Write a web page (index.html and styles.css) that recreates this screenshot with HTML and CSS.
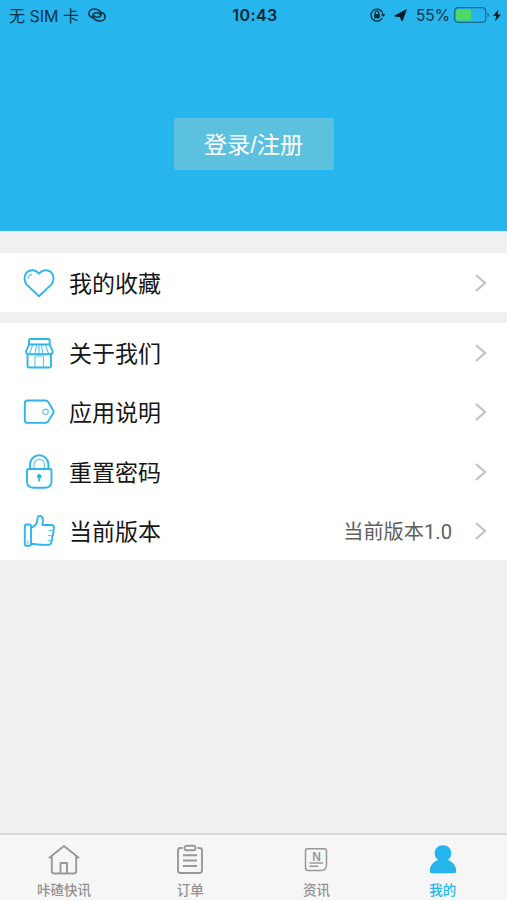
FILE: index.html
```html
<!DOCTYPE html>
<html lang="zh-CN">
<head>
<meta charset="utf-8">
<title>我的</title>
<link rel="stylesheet" href="styles.css">
</head>
<body>
<div class="app">
  <header class="hero">
    <div class="status">
      <div class="status-left"><span>无 SIM 卡</span>
        <svg class="link" width="18" height="14" viewBox="0 0 18 14"><g fill="none" stroke="#0c3447" stroke-width="1.600" stroke-linecap="round"><path d="M4.500 9.600C2.300 8.900.9 7.200.9 5.300.9 2.700 3.300 1 6.300 1c3.700 0 6.800 2.300 6.800 5 0 2-1.600 3.300-3.700 3.300-1.800 0-3.200-.8-3.800-2"/><path d="M13.500 4.400c2.200.7 3.600 2.400 3.600 4.300 0 2.600-2.400 4.300-5.400 4.300C8 13 4.900 10.700 4.900 8c0-2 1.600-3.300 3.700-3.300 1.800 0 3.200.8 3.800 2"/></g></svg>
      </div>
      <div class="time">10:43</div>
      <div class="status-right">
        <svg class="lock-rot" width="16" height="14" viewBox="0 0 16 14"><g fill="none" stroke="#082b3c" stroke-width="1.300"><path d="M12.300 10A6 6 0 1 1 13 6.500"/><path d="M5.300 6V4.900a1.700 1.700 0 0 1 3.400 0V6"/></g><path d="M4.200 5.900h5.600v4.300H4.200zM10.800 6.200h4.600L13.100 9z" fill="#082b3c"/></svg>
        <svg class="arrow" width="13" height="13" viewBox="0 0 13 13"><path d="M12.300.8 8 12 6.300 7.700.8 6.900z" fill="#061d29" stroke="#061d29" stroke-width="1" stroke-linejoin="round"/></svg>
        <span class="percent">55%</span>
        <svg class="battery" width="36" height="16" viewBox="0 0 36 16"><rect x=".7" y=".7" width="31" height="14.600" rx="3.500" fill="none" stroke="#176a91" stroke-width="1.200"/><path d="M3.500 2.500H17v11H3.500A1.500 1.500 0 0 1 2 12V4a1.500 1.500 0 0 1 1.500-1.500z" fill="#4ed964"/><path d="M33.500 5.500q3 2.500 0 5z" fill="#176a91"/></svg>
        <svg class="bolt" width="8" height="13" viewBox="0 0 8 13"><path d="M5.500.5 0 7h3.300L2 12.500 8 5.500H4.600z" fill="#061d29"/></svg>
      </div>
    </div>
    <button class="login">登录/注册</button>
  </header>

  <main class="content">
    <section class="group">
      <div class="row">
        <svg class="icon" viewBox="0 0 32 36"><path d="M16 31.300 3.800 19.600C.6 16 .8 10 3.900 7.300 7.600 4 13 4.700 16 8.600c3-3.900 8.400-4.600 12.100-1.300 3.100 2.700 3.300 8.700.1 12.300z"/><path class="fine" d="M5.300 13.200c.2-2 1.500-3.400 3.400-3.800"/></svg>
        <span class="label">我的收藏</span>
        <svg class="chevron" viewBox="0 0 12 18"><path d="m1 1 9 8-9 8"/></svg>
      </div>
    </section>
    <section class="group">
      <div class="row">
        <svg class="icon" viewBox="0 0 32 36"><path d="M6 9.500v-4Q6 4 7.500 4h17.700q1.500 0 1.500 1.500v4M6 9.500h20.700l3 7c0 2-1.500 2.800-3 2.800H6c-1.500 0-3-.8-3-2.800zM4.500 19.500V31q0 1.500 1.500 1.500h20.500q1.500 0 1.500-1.500V19.500"/><path class="fine" d="m9.500 10.500-3 8m7-8-1.500 8m4-8v8m2.500-8 1.500 8m2.500-8 3 8M12 32v-9.500q0-1.500 1.500-1.500h5.500q1.500 0 1.500 1.500V32"/></svg>
        <span class="label">关于我们</span>
        <svg class="chevron" viewBox="0 0 12 18"><path d="m1 1 9 8-9 8"/></svg>
      </div>
      <div class="row">
        <svg class="icon" viewBox="0 0 32 36"><path d="M4.500 6.500h18q1.800 0 2.800 1.600l5 8.300q.8 1.300 0 2.600l-5 8.300q-1 1.600-2.800 1.600h-18q-2.700 0-2.700-2.700V9.200q0-2.700 2.700-2.700z"/><circle class="fine" cx="22.500" cy="17.800" r="2.700"/></svg>
        <span class="label">应用说明</span>
        <svg class="chevron" viewBox="0 0 12 18"><path d="m1 1 9 8-9 8"/></svg>
      </div>
      <div class="row">
        <svg class="icon" viewBox="0 0 32 36"><path d="M7 15v-4.500a9.200 9.200 0 0 1 18.400 0V15M4 16.500Q4 15 5.500 15H27q1.500 0 1.500 1.500v10.800q0 6.500-7 6.500H11q-7 0-7-6.500z"/><path class="fine" d="M11 14.500v-4a5.200 5.200 0 0 1 10.400 0v4"/><path class="fill" d="M15.300 27v-2.500a2.300 2.300 0 1 1 1.900 0V27q-.95 1.500-1.900 0z"/></svg>
        <span class="label">重置密码</span>
        <svg class="chevron" viewBox="0 0 12 18"><path d="m1 1 9 8-9 8"/></svg>
      </div>
      <div class="row">
        <svg class="icon" viewBox="0 0 32 36"><path d="M8.500 14.500C12.500 13 14.500 10.500 14.500 5.500c0-4 5.300-3.500 5.400 1.500 0 2-.2 3.500-.5 5H28q3 0 3 2.800 0 1.600-.7 2.500.5 1.300-.2 4-.1 1.200-.8 2 .2 3-.8 5 0 3.500-3.500 3.500-10 .2-16.500-1M3.300 11.500h3.200Q8 11.500 8 13v18.300q0 1.500-1.500 1.500H3.300q-1.500 0-1.500-1.500V13q0-1.500 1.500-1.500z"/><path class="fine" d="M26 17.500h4M25.500 22.500h4M25 27.500h3.500M4.800 28v2.500"/></svg>
        <span class="label">当前版本</span>
        <span class="value">当前版本1.0</span>
        <svg class="chevron" viewBox="0 0 12 18"><path d="m1 1 9 8-9 8"/></svg>
      </div>
    </section>
  </main>

  <nav class="tabs">
    <div class="tab">
      <svg viewBox="0 0 32 32"><path d="M1 14 16 2l15 12M3.800 12.500V27q0 2.500 2.500 2.500h19.400q2.500 0 2.500-2.500V12.500M12.500 29V19H19v10"/></svg>
      <span>咔碴快讯</span>
    </div>
    <div class="tab">
      <svg viewBox="0 0 32 32"><path d="M8.500 4h-2Q4 4 4 6.500v20Q4 29 6.500 29h19q2.500 0 2.500-2.500v-20Q28 4 25.500 4h-2M9 11.300h14M9 16.500h14M9 22h14"/><rect x="10.500" y="1.800" width="11" height="4.500" rx="2"/></svg>
      <span>订单</span>
    </div>
    <div class="tab">
      <svg viewBox="0 0 32 32"><path class="thin" d="M8 4.700h16q2.500 0 2.500 2.500v13.300q0 6-6 6H8q-2.500 0-2.500-2.500V7.200q0-2.500 2.500-2.500zM9.500 19H23M9.500 22.200h9"/><text x="16.500" y="16.600" text-anchor="middle">N</text></svg>
      <span>资讯</span>
    </div>
    <div class="tab active">
      <svg viewBox="0 0 32 32"><path d="M16 1.300c5 0 8.300 3.500 8.300 8 0 3-1.300 5.200-3.400 6.800 5.500 2 8.300 6.200 8.300 11q0 2.200-2 2.200H4.800q-2 0-2-2.200c0-4.800 2.800-9 8.300-11C9 14.500 7.700 12.300 7.700 9.300c0-4.500 3.300-8 8.300-8z"/></svg>
      <span>我的</span>
    </div>
  </nav>
</div>
</body>
</html>
```

FILE: styles.css
```css
* { box-sizing: border-box; }
body {
  margin: 0;
  font-family: "Liberation Sans", "Noto Sans CJK SC", sans-serif;
  background: #f0f0f0;
}
.app {
  display: flex;
  flex-direction: column;
  width: 507px;
  height: 900px;
  overflow: hidden;
}
svg { display: block; flex: none; }

.hero {
  height: 231px;
  flex: none;
  background: #27b5ee;
  display: flex;
  flex-direction: column;
  align-items: center;
}
.status {
  width: 100%;
  height: 30px;
  padding: 0 6px 0 9px;
  display: grid;
  grid-template-columns: 1fr auto 1fr;
  align-items: center;
  color: #0c3447;
  font-family: Inter, "Noto Sans CJK SC", sans-serif;
  font-size: 15.500px;
  line-height: 28px;
  white-space: nowrap;
}
.status-left, .status-right { display: flex; align-items: center; }
.status-left { gap: 9px; }
.status-left span { font-size: 16px; padding-top: 1px; }
.status-right { justify-content: flex-end; }
.time { font-weight: 600; font-size: 16px; letter-spacing: .4px; color: #082431; }
.arrow { margin-left: 8px; }
.percent { margin-left: 9px; padding-top: 1px; }
.battery { margin-left: 4px; }
.bolt { margin-left: 3px; }

.login {
  width: 160px;
  height: 52px;
  margin-top: 88px;
  padding: 2px 0 0;
  border: 0;
  border-radius: 3px;
  background: #5cc0df;
  color: #fff;
  font: 23.200px/50px "Liberation Sans", "Noto Sans CJK SC", sans-serif;
}

.content {
  flex: 1;
  padding-top: 22px;
  display: flex;
  flex-direction: column;
  gap: 11px;
}
.group { background: #fff; }
.row {
  height: 59.300px;
  padding: 0 20px 0 23px;
  display: flex;
  align-items: center;
}
.icon {
  width: 32px;
  height: 36px;
  fill: none;
  stroke: #2fb5ea;
  stroke-width: 1.900;
  stroke-linecap: round;
  stroke-linejoin: round;
}
.icon .fine { stroke-width: 1.200; opacity: .75; }
.icon .fill { fill: #2fb5ea; stroke: none; }
.label {
  margin-left: 14px;
  padding-top: 2px;
  font-size: 23px;
  line-height: 34px;
  color: #161616;
}
.value {
  margin-left: auto;
  padding-top: 2px;
  font-family: Roboto, "Noto Sans CJK SC", sans-serif;
  font-size: 20.200px;
  line-height: 30px;
  color: #606060;
}
.chevron {
  width: 12px;
  height: 18px;
  margin-left: auto;
  fill: none;
  stroke: #c2c2c2;
  stroke-width: 2.200;
}
.value + .chevron { margin-left: 23px; }

.tabs {
  height: 67px;
  flex: none;
  border-top: 2px solid #d9d9d9;
  background: #f6f6f6;
  display: grid;
  grid-template-columns: repeat(4, 126.200px);
  padding-left: 1px;
}
.tab {
  display: flex;
  flex-direction: column;
  align-items: center;
  padding-top: 9px;
  color: #929292;
  font-size: 13.500px;
  line-height: 20px;
  font-weight: 500;
}
.tab svg {
  width: 32px;
  height: 32px;
  fill: none;
  stroke: #999;
  stroke-width: 1.900;
  stroke-linejoin: round;
}
.tab .thin { stroke-width: 1.500; }
.tab text { font: bold 12px "Liberation Sans", sans-serif; fill: #999; stroke: none; }
.tab.active { color: #27b5ee; }
.tab.active svg { fill: #27b5ee; stroke: none; }
.tab span { margin-top: 5px; }
```
